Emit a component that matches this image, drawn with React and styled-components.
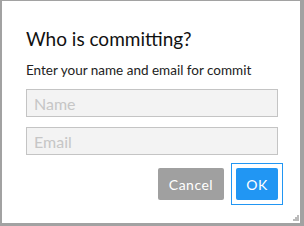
import styled, { createGlobalStyle } from "styled-components";

const GlobalStyle = createGlobalStyle`
  html, body {
    margin: 0;
    padding: 0;
    background: #a2a2a2;
    width: 304px;
    height: 226px;
    overflow: hidden;
  }
`;

export default function App() {
  return (
    <>
      <GlobalStyle />
      <Screen>
        <Dialog>
          <Title>Who is committing?</Title>
          <Hint>Enter your name and email for commit</Hint>
          <Field placeholder="Name" />
          <Field placeholder="Email" />
          <Actions>
            <Button variant="cancel">Cancel</Button>
            <Button variant="ok" focused>
              OK
            </Button>
          </Actions>
          <Grip width="6" height="6" viewBox="0 0 6 6">
            <rect x="4" y="0" width="2" height="2" fill="#bbb" />
            <rect x="2" y="2" width="2" height="2" fill="#bbb" />
            <rect x="4" y="2" width="2" height="2" fill="#bbb" />
            <rect x="0" y="4" width="2" height="2" fill="#bbb" />
            <rect x="2" y="4" width="2" height="2" fill="#bbb" />
            <rect x="4" y="4" width="2" height="2" fill="#bbb" />
          </Grip>
        </Dialog>
      </Screen>
    </>
  );
}

const Screen = styled.div`
  padding: 1px 0 0 2px;
`;

const Dialog = styled.div`
  position: relative;
  box-sizing: border-box;
  width: 298px;
  height: 222px;
  background: #ffffff;
  padding: 24px 22px 0 24px;
  display: flex;
  flex-direction: column;
  font-family: Lato, "Open Sans", sans-serif;
`;

const Title = styled.h1`
  margin: 0;
  font-size: 19px;
  font-weight: 400;
  line-height: 28px;
  color: #111;
`;

const Hint = styled.p`
  margin: 8px 0 10px;
  font-size: 13.5px;
  line-height: 18px;
  color: #222;
`;

const Field = styled.input`
  box-sizing: border-box;
  width: 252px;
  height: 28px;
  margin-bottom: 10px;
  padding: 0 7px;
  border: 1px solid #c4c4c4;
  background: #f3f3f3;
  font-family: inherit;
  font-size: 16px;
  color: #333;
  outline: none;

  &::placeholder {
    color: #c6c6c6;
  }
`;

const Actions = styled.div`
  display: flex;
  justify-content: flex-end;
  gap: 12px;
  width: 252px;
  margin-top: 3px;
`;

const Button = styled.button`
  position: relative;
  box-sizing: border-box;
  height: 32px;
  width: ${(p) => (p.variant === "ok" ? "42px" : "66px")};
  padding: 0;
  border: none;
  border-radius: 2px;
  font-family: inherit;
  font-size: 14px;
  letter-spacing: 0.5px;
  color: #fff;
  background: ${(p) => (p.variant === "ok" ? "#2196f3" : "#a0a0a0")};
  outline: none;

  &::after {
    content: "";
    display: ${(p) => (p.focused ? "block" : "none")};
    position: absolute;
    inset: -5px;
    border: 1px solid #2196f3;
  }
`;

const Grip = styled.svg`
  position: absolute;
  right: 1px;
  bottom: 2px;
`;
